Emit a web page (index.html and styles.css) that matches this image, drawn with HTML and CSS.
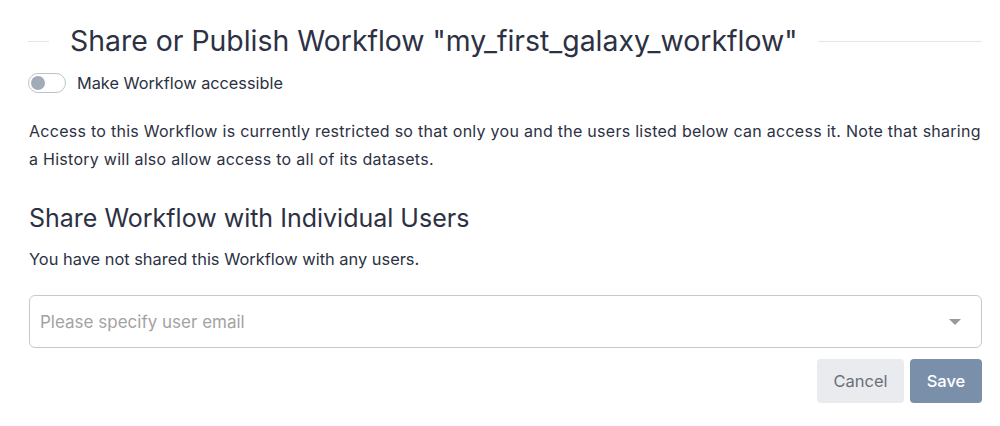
FILE: index.html
```html
<!DOCTYPE html>
<html>
<head>
<meta charset="utf-8">
<link rel="stylesheet" href="styles.css">
</head>
<body>
<div class="page">
  <div class="title-row">
    <span class="rule rule-left"></span>
    <h1 class="title">Share or Publish Workflow "my_first_galaxy_workflow"</h1>
    <span class="rule rule-right"></span>
  </div>
  <label class="toggle-row">
    <span class="switch"><span class="knob"></span></span>
    <span class="toggle-label">Make Workflow accessible</span>
  </label>
  <p class="info">Access to this Workflow is currently restricted so that only you and the users listed below can access it. Note that sharing a History will also allow access to all of its datasets.</p>
  <h2 class="subtitle">Share Workflow with Individual Users</h2>
  <p class="note">You have not shared this Workflow with any users.</p>
  <div class="select">
    <span class="placeholder">Please specify user email</span>
    <span class="caret"></span>
  </div>
  <div class="actions">
    <button class="btn btn-cancel">Cancel</button>
    <button class="btn btn-save">Save</button>
  </div>
</div>
</body>
</html>
```
FILE: styles.css
```css
html, body {
  margin: 0;
  padding: 0;
  background: #ffffff;
}
body {
  font-family: Inter, "Noto Sans", sans-serif;
  color: #2c3143;
}
.page {
  padding: 14px 18px 0 28px;
}
.title-row {
  display: flex;
  align-items: center;
  gap: 21px;
  height: 54px;
}
.rule {
  height: 1px;
  background: #e3e5e9;
  margin-top: 1px;
}
.rule-left {
  width: 21px;
  flex: none;
}
.rule-right {
  flex: 1;
}
.title {
  margin: 0;
  font-size: 28.4px;
  font-weight: 400;
  line-height: 32px;
  white-space: nowrap;
}
.toggle-row {
  display: flex;
  align-items: center;
  gap: 11px;
  margin-top: 1px;
  height: 28px;
}
.switch {
  width: 34px;
  height: 18px;
  border: 1px solid #bcc3cd;
  border-radius: 10px;
  background: #fff;
  display: flex;
  align-items: center;
  padding-left: 2px;
  box-sizing: content-box;
}
.knob {
  width: 14px;
  height: 14px;
  border-radius: 50%;
  background: #a2acb8;
}
.toggle-label {
  font-size: 16.3px;
}
.info {
  margin: 20px 0 0 1px;
  font-size: 16px;
  letter-spacing: 0.27px;
  line-height: 28px;
}
.subtitle {
  margin: 30px 0 0 1px;
  font-size: 25px;
  font-weight: 400;
  line-height: 30px;
}
.note {
  margin: 14px 0 0 1px;
  font-size: 16.4px;
  line-height: 24px;
}
.select {
  margin: 24px 0 0 1px;
  height: 51px;
  border: 1px solid #c3cad5;
  border-radius: 6px;
  display: flex;
  align-items: center;
  padding: 0 20px 0 10px;
}
.placeholder {
  flex: 1;
  font-size: 17px;
  color: #a3a3a3;
}
.caret {
  width: 0;
  height: 0;
  border-left: 6px solid transparent;
  border-right: 6px solid transparent;
  border-top: 6px solid #999999;
}
.actions {
  display: flex;
  justify-content: flex-end;
  gap: 6px;
  margin-top: 11px;
}
.btn {
  font-family: Inter, "Noto Sans", sans-serif;
  font-size: 16.5px;
  height: 44px;
  border: none;
  border-radius: 4px;
  padding: 0 10px;
}
.btn-cancel {
  background: #e9ebef;
  color: #6c6f76;
  width: 87px;
}
.btn-save {
  background: #7a90aa;
  color: #ffffff;
  font-weight: 500;
  width: 72px;
}
```
